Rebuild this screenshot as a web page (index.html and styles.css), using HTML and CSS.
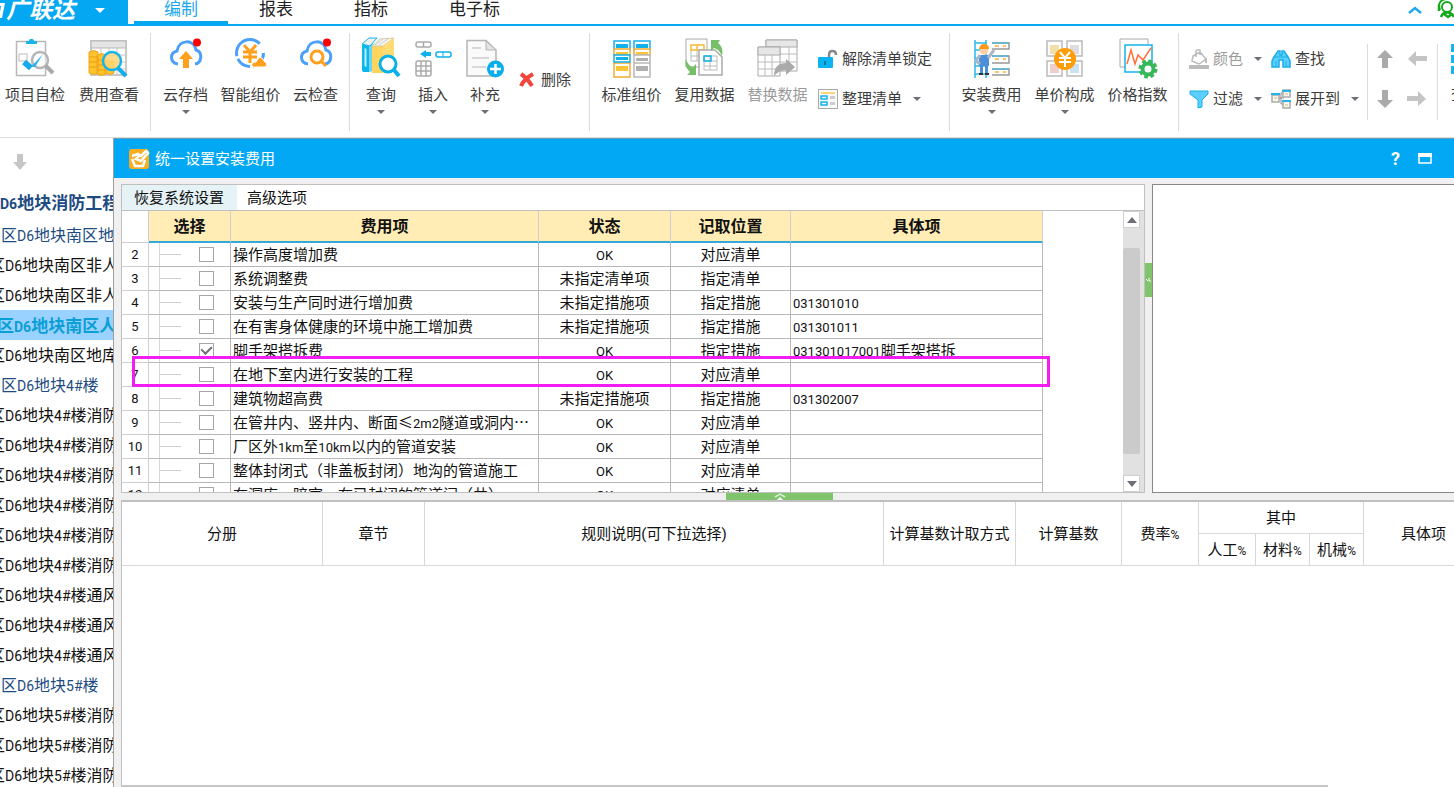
FILE: index.html
```html
<!DOCTYPE html>
<html lang="zh-CN">
<head>
<meta charset="utf-8">
<title>统一设置安装费用</title>
<link rel="stylesheet" href="styles.css">
</head>
<body>
<header class="topbar">
  <button class="brand" type="button">
    <svg class="brand-mark" viewBox="0 0 6 20"><path d="M0 3H5L2 18H-1L1 6H0Z" fill="#fff"/></svg>
    <span class="brand-name">广联达</span><span class="caret caret-white"></span>
  </button>
  <nav class="tabs">
    <a class="tab active" href="#">编制</a>
    <a class="tab" href="#">报表</a>
    <a class="tab" href="#">指标</a>
    <a class="tab" href="#">电子标</a>
  </nav>
  <div class="top-tools">
    <svg width="14" height="8" viewBox="0 0 14 8"><path d="M1 7L7 2L13 7" fill="none" stroke="#1ba8ec" stroke-width="2.4"/></svg>
    <svg width="17" height="20" viewBox="0 0 17 20"><g fill="none" stroke="#14a81c"><circle cx="10" cy="7" r="5" stroke-width="2"/><path d="M3 10C0 4 4-1 10-1" stroke-width="2"/><path d="M2 5V11M4 17C6 11 14 11 17 17M7 14L11 17L15 14" stroke-width="2.5"/></g></svg>
  </div>
</header>

<div class="ribbon">
  <section class="group g-check">
    <button class="big" type="button">
      <svg viewBox="0 0 40 40"><g transform="translate(-4 0)"><rect x="5.500" y="3.500" width="29" height="34" fill="#fff" stroke="#b8b8b8" stroke-width="1.500"/><path d="M15 6V3H18C18 0 23 0 23 3H26V6Z" fill="#19b5ea"/><rect x="8" y="16" width="8" height="7" fill="none" stroke="#bbb"/><path d="M13 24L20 30" fill="none" stroke="#17a9ee" stroke-width="6"/><circle cx="29" cy="22" r="8" fill="#fff" fill-opacity=".5" stroke="#b5b5b5" stroke-width="2.500"/><path d="M35 28L42 35" stroke="#aaa" stroke-width="4"/><path d="M20 29L32 16L24 29Z" fill="#20b5f5"/></g></svg>
      <span>项目自检</span></button>
    <button class="big" type="button">
      <svg viewBox="0 0 40 40"><rect x="2" y="3" width="35" height="34" fill="#fff" stroke="#b8b8b8" stroke-width="1.500"/><rect x="2" y="3" width="35" height="7" fill="#e4e4e4" stroke="#b8b8b8"/><path d="M2 17H37M2 24H37M2 31H37M12 10V37M20 10V37M28 10V37" stroke="#c4c4c4"/><path d="M0 14Q5 11 9 14V35Q5 38 0 35ZM8 17Q13 14 17 17V36Q12 39 8 36ZM16 23H25V35Q20 38 16 35Z" fill="#ffc32c" stroke="#f0a51e"/><path d="M0 19H9M0 24H9M0 29H9M8 22H17M8 27H17M8 32H17" stroke="#e99d12"/><circle cx="23" cy="23" r="9" fill="#ffd673" fill-opacity=".8" stroke="#16b4ef" stroke-width="2.500"/><path d="M29 30L37 38" stroke="#12aeea" stroke-width="4"/></svg>
      <span>费用查看</span></button>
  </section>

  <section class="group g-cloud">
    <button class="big" type="button">
      <svg viewBox="0 0 40 40"><path d="M12 26C4 25 3 15 11 13C13 1 28 1 30 12C37 14 36 25 29 26" fill="none" stroke="#4ba0fa" stroke-width="3"/><path d="M20 13L27 21H23V30H17V21H13Z" fill="#ff9f1c"/><circle cx="31" cy="4.500" r="4" fill="#f00"/></svg>
      <span>云存档</span><i class="caret"></i></button>
    <button class="big" type="button">
      <svg viewBox="0 0 40 40"><circle cx="19" cy="15" r="13.500" fill="none" stroke="#4ba0fa" stroke-width="3" stroke-dasharray="18 3 15 3 35 12"/><path d="M13 7L19 14L25 7M19 14V25M12 14H26M12 19H26" fill="none" stroke="#ff9f1c" stroke-width="3"/><path d="M21 29Q20 24 25 24Q29 15 33 23Q37 25 35 29Z" fill="#ff9f1c" stroke="#fff"/></svg>
      <span>智能组价</span></button>
    <button class="big" type="button">
      <svg viewBox="0 0 40 40"><path d="M12 26C4 25 3 15 11 13C13 1 28 1 30 12C37 14 36 25 29 26" fill="none" stroke="#4ba0fa" stroke-width="3"/><circle cx="21" cy="19" r="6" fill="#fff" stroke="#ff9f1c" stroke-width="3"/><path d="M25 23L30 28" stroke="#ff9f1c" stroke-width="3"/><circle cx="31" cy="4.500" r="4" fill="#f00"/></svg>
      <span>云检查</span></button>
  </section>

  <section class="group g-edit">
    <button class="big" type="button">
      <svg viewBox="0 0 40 40"><path d="M1 6L9 34L2 34L1 32Z" fill="#0bb7ec"/><path d="M1 6L8 8V34L1 32Z" fill="#0bb7ec"/><path d="M8 8L12 5V33L8 34Z" fill="#6fd4f2"/><path d="M1 6L8 0H16L9 8Z" fill="#eee" stroke="#0bb7ec"/><path d="M3.500 10L5.500 11V29L3.500 28Z" fill="#bdeefa"/><path d="M11 8H22V35H11Z" fill="#ffd560"/><path d="M11 8L19 1L33 0L22 8Z" fill="#f6f6f6" stroke="#d5c9a4"/><path d="M14 7L22 1M18 7L27 1" stroke="#ccc"/><path d="M22 8L33 0V30L22 35Z" fill="#ffdc73"/><circle cx="27" cy="26" r="8" fill="#fff" stroke="#08b1e8" stroke-width="3"/><path d="M33 32L38 38" stroke="#08b1e8" stroke-width="4"/></svg>
      <span>查询</span><i class="caret"></i></button>
    <button class="big" type="button">
      <svg viewBox="0 0 40 40"><g fill="#fff" stroke="#aaa" stroke-width="1.500"><rect x="3" y="4" width="15" height="5" rx="2"/><path d="M10.500 4V9"/><rect x="3" y="23" width="15" height="15" rx="2"/><path d="M3 28H18M3 33H18M8 23V38M13 23V38"/></g><path d="M7 16L13 12V14H18V18H13V20Z" fill="#0db1ec"/><rect x="23" y="14" width="15" height="5" rx="2" fill="#fff" stroke="#0db1ec" stroke-width="1.500"/><path d="M30 14V19" stroke="#0db1ec"/></svg>
      <span>插入</span><i class="caret"></i></button>
    <button class="big" type="button">
      <svg viewBox="0 0 40 40"><path d="M2 2.500H21L31 12V38H2Z" fill="#fafafa" stroke="#b5b5b5" stroke-width="1.500"/><path d="M21 3V12H31Z" fill="#e3e3e3" stroke="#b5b5b5"/><path d="M7 10H16M7 20H24M7 29H21" stroke="#d8d8d8" stroke-width="2"/><circle cx="30.500" cy="31" r="8.500" fill="#08aeea"/><path d="M25 31H36M30.500 26V36" stroke="#fff" stroke-width="2.500"/></svg>
      <span>补充</span><i class="caret"></i></button>
    <button class="small delete" type="button">
      <svg width="16" height="16" viewBox="0 0 16 16"><path d="M2 2Q9 7 13 14M14 2Q5 7 2 14" fill="none" stroke="#f4443c" stroke-width="4"/></svg>删除</button>
  </section>

  <section class="group g-list">
    <button class="big" type="button">
      <svg viewBox="0 0 40 40"><g fill="#fff" stroke-width="1.500"><path d="M2 3H18V12H2ZM22 3H38V12H22Z" stroke="#12b0e9"/><path d="M2 11H18V17H2ZM22 11H38V17H22ZM2 25H18V39H2Z" stroke="#f5ac32"/><path d="M2 17H18V24H2Z" stroke="#12b0e9"/><path d="M22 17H38V25H22ZM22 25H38V39H22Z" stroke="#b8b8b8"/></g><path d="M4 6H16V10H4ZM24 6H36V10H24ZM4 19H16V22H4Z" fill="#12b0e9"/><path d="M4 14H16V16H4ZM24 14H36V16H24ZM4 28H16V33H4Z" fill="#ffc336"/><path d="M24 20H36V23H24ZM24 28H36V33H24Z" fill="#b0b0b0"/></svg>
      <span>标准组价</span></button>
    <button class="big" type="button">
      <svg viewBox="0 0 40 40"><path d="M1 1H22V29H1Z" fill="#fff" stroke="#aaa"/><path d="M6 7H19V23H6ZM6 12H19M6 18H19M12 7V23" fill="none" stroke="#bbb"/><path d="M6 7H19V12H6ZM12 7V12" fill="none" stroke="#ffc336" stroke-width="1.500"/><path d="M14 12H30L37 19V37H14Z" fill="#fff" stroke="#aaa" stroke-width="1.500"/><path d="M19 18H32V32H19ZM19 23H32M19 28H32M25 18V32" fill="none" stroke="#bbb"/><rect x="19" y="18" width="7" height="5" fill="none" stroke="#12b0e9" stroke-width="1.500"/><path d="M26 2H35L33 5Q39 9 37 18Q34 11 29 10L26 13ZM1 21Q3 28 8 29L11 26V37H2L5 34Q-1 29 1 21Z" fill="#75bf69"/></svg>
      <span>复用数据</span></button>
    <button class="big disabled" type="button" disabled>
      <svg viewBox="0 0 40 40"><path d="M8 2H39V33H8Z" fill="#fff" stroke="#aaa"/><path d="M8 2H39V9H8Z" fill="#e7e7e7" stroke="#aaa"/><path d="M31 9V33M22 16H39M22 24H39" stroke="#bbb"/><path d="M0 9H22V38H0Z" fill="#fff" stroke="#aaa"/><path d="M0 9H22V17H0Z" fill="#e7e7e7" stroke="#aaa"/><path d="M0 24H22M0 31H22M7 17V38M14 17V38" stroke="#bbb"/><path d="M16 38Q16 25 28 25V21L37 29L28 37V32Q21 32 16 38Z" fill="#aaa"/></svg>
      <span>替换数据</span></button>
    <div class="stack">
      <button class="small" type="button"><svg width="20" height="20" viewBox="0 0 20 20"><path d="M11 10V6Q11 2 14.500 2Q18 2 18 6" fill="none" stroke="#888" stroke-width="2.500"/><rect y="8" width="15" height="11" rx="1" fill="#0bb4f1"/><path d="M7 12V16" stroke="#087da5" stroke-width="2"/></svg>解除清单锁定</button>
      <button class="small" type="button"><svg width="20" height="20" viewBox="0 0 20 20"><rect x=".5" y=".5" width="19" height="19" fill="#fafafa" stroke="#aaa"/><path d="M3 4H17" stroke="#ffd777" stroke-width="2"/><path d="M3 7H9V10H3ZM3 13H9V16H3Z" fill="#dff5ff" stroke="#19b2eb" stroke-width="1.500"/><path d="M12 7H17V10H12ZM12 13H17V16H12Z" fill="#ccc"/></svg>整理清单<i class="caret"></i></button>
    </div>
  </section>

  <section class="group g-price">
    <button class="big" type="button">
      <svg viewBox="0 0 40 40"><path d="M3 2V40M14 2V40M3 5H14M3 12H14M3 20H14M3 28H14M3 36H14" stroke="#28bbea" stroke-width="1.500"/><path d="M20 5H37V11H20M20 18H37V25H20M20 31H37V37H20" fill="none" stroke="#999" stroke-width="1.500"/><path d="M20 5H37M20 18H37M20 31H37" stroke="#28bbea"/><path d="M23 8H27M31 8H34M23 21H27M31 21H34M23 34H27M31 34H34" stroke="#ffad39" stroke-width="1.500"/><path d="M7 17H17V28H16V36H13V28H11V36H8V28H7Z" fill="#4b8fd8"/><path d="M8 17L4 23L8 26M16 20L22 12" fill="none" stroke="#aab8c5" stroke-width="3"/><circle cx="12" cy="12" r="4.500" fill="#ffd0a3"/><path d="M7 11Q8 6 12 6Q17 6 17 11Z" fill="#ff9619"/><path d="M7 36H11M13 36H17" stroke="#333" stroke-width="2"/></svg>
      <span>安装费用</span><i class="caret"></i></button>
    <button class="big" type="button">
      <svg viewBox="0 0 40 40"><path d="M2 3H17V18H2ZM22 3H37V18H22ZM2 23H17V38H2ZM22 23H37V38H22Z" fill="#fff" stroke="#bbb" stroke-width="1.500"/><path d="M5 7H14V16H5Z" fill="#efe0aa"/><path d="M25 7H34V16H25Z" fill="#ddd"/><path d="M5 26H14V35H5Z" fill="#efcece"/><path d="M25 26H34V35H25Z" fill="#cce2f1"/><circle cx="20" cy="21" r="11" fill="#ff9d08"/><path d="M15 14L20 20L25 14M20 20V29M14 20H26M14 24H26" fill="none" stroke="#fff" stroke-width="2"/></svg>
      <span>单价构成</span><i class="caret"></i></button>
    <button class="big" type="button">
      <svg viewBox="0 0 40 40"><path d="M2 1H30V29H2Z" fill="#fff" stroke="#aaa"/><path d="M7 7H34V34H7Z" fill="#fff" stroke="#14b4ea" stroke-width="1.500"/><path d="M9 26L13 12L17 26L20 17L25 22L33 10" fill="none" stroke="#ff7138" stroke-width="1.500"/><circle cx="30" cy="31" r="7.500" fill="none" stroke="#37b75a" stroke-width="4" stroke-dasharray="3.500 2.400"/><circle cx="30" cy="31" r="5.500" fill="#fff" stroke="#37b75a" stroke-width="4"/></svg>
      <span>价格指数</span></button>
  </section>

  <section class="group g-find">
    <button class="small disabled" type="button"><svg width="20" height="20" viewBox="0 0 20 20"><path d="M4 7L11 3L17 10L10 15L3 12ZM7 8V2Q8 0 11 1V6" fill="none" stroke="#bbb" stroke-width="1.500"/><path d="M17 9V14" stroke="#bbb" stroke-width="2"/><path d="M0 16H20V20H0Z" fill="#bbb"/></svg>颜色<i class="caret"></i></button>
    <button class="small" type="button"><svg width="20" height="20" viewBox="0 0 20 20"><path d="M3 8L7 2H9V6H11V2H13L17 8L19 12V18H12V11H8V18H1V12Z" fill="#5cceff" stroke="#18aee9" stroke-width="1.500"/><path d="M3 8H17M5 12V17M15 12V17" stroke="#18aee9"/></svg>查找</button>
    <button class="small" type="button"><svg width="20" height="20" viewBox="0 0 20 20"><path d="M1 2H19V5L13 11V18L9 19V11L1 5Z" fill="#5cceff" stroke="#18aee9"/></svg>过滤<i class="caret"></i></button>
    <button class="small" type="button"><svg width="20" height="20" viewBox="0 0 20 20"><path d="M8 9H13M10 4V15H13M10 4H13" fill="none" stroke="#888"/><path d="M1 6H8V13H1ZM12 1H19V8H12ZM12 12H19V19H12Z" fill="#faf6ee" stroke="#aaa" stroke-width="1.500"/><path d="M0 5H9M11 2H20M11 12H20" stroke="#23b5ea" stroke-width="2"/><path d="M3 9H6M14 5H17M14 16H17" stroke="#d8b478"/></svg>展开到<i class="caret"></i></button>
  </section>

  <section class="group g-move">
    <button type="button" aria-label="上移"><svg viewBox="0 0 20 20"><path d="M10 1L18 9H13V19H7V9H2Z" fill="#aaa"/></svg></button>
    <button type="button" aria-label="左移"><svg viewBox="0 0 20 20"><path d="M1 10L9 2V7H20V12H9V17Z" fill="#c4c4c4"/></svg></button>
    <button type="button" aria-label="下移"><svg viewBox="0 0 20 20"><path d="M10 19L18 11H13V1H7V11H2Z" fill="#aaa"/></svg></button>
    <button type="button" aria-label="右移"><svg viewBox="0 0 20 20"><path d="M19 10L11 2V7H0V12H11V17Z" fill="#c4c4c4"/></svg></button>
  </section>
  <section class="group g-more">
    <button class="big" type="button"><svg viewBox="0 0 40 40"><path d="M0 6H40V14H0ZM0 17H40V25H0ZM0 28H40V36H0Z" fill="#18b4ed"/></svg><span>查看</span></button>
  </section>
</div>

<main class="workspace">
  <aside class="sidebar">
    <button class="side-down" type="button" aria-label="下移"><svg width="16" height="16" viewBox="0 0 16 16"><path d="M5 0H11V8H15L8 16L1 8H5Z" fill="#c6c6c6"/></svg></button>
    <ul class="tree">
      <li class="root"><span>D6</span>地块消防工程</li>
      <li class="unit">区<span>D6</span>地块南区地库</li>
      <li>区<span>D6</span>地块南区非人防</li>
      <li>区<span>D6</span>地块南区非人防</li>
      <li class="selected">区<span>D6</span>地块南区人防</li>
      <li>区<span>D6</span>地块南区地库</li>
      <li class="unit">区<span>D6</span>地块<span>4#</span>楼</li>
      <li>区<span>D6</span>地块<span>4#</span>楼消防</li>
      <li>区<span>D6</span>地块<span>4#</span>楼消防</li>
      <li>区<span>D6</span>地块<span>4#</span>楼消防</li>
      <li>区<span>D6</span>地块<span>4#</span>楼消防</li>
      <li>区<span>D6</span>地块<span>4#</span>楼消防</li>
      <li>区<span>D6</span>地块<span>4#</span>楼消防</li>
      <li>区<span>D6</span>地块<span>4#</span>楼通风</li>
      <li>区<span>D6</span>地块<span>4#</span>楼通风</li>
      <li>区<span>D6</span>地块<span>4#</span>楼通风</li>
      <li class="unit">区<span>D6</span>地块<span>5#</span>楼</li>
      <li>区<span>D6</span>地块<span>5#</span>楼消防</li>
      <li>区<span>D6</span>地块<span>5#</span>楼消防</li>
      <li>区<span>D6</span>地块<span>5#</span>楼消防</li>
    </ul>
  </aside>

  <section class="dialog">
    <header class="titlebar">
      <svg width="20" height="20" viewBox="0 0 20 20"><rect width="20" height="20" rx="3" fill="#f9ad22"/><path d="M3 7L9 5L12 7L17 2L19 4L12 12L7 10L10 7M3 10L6 17L14 17L16 11" fill="none" stroke="#fff" stroke-width="2.500"/></svg>
      <h1>统一设置安装费用</h1>
      <button class="help" type="button">?</button>
      <button class="max" type="button" aria-label="最大化"><svg width="14" height="11" viewBox="0 0 14 11"><path d="M1 1H13V10H1Z" fill="none" stroke="#fff" stroke-width="1.500"/><path d="M0 0H14V4H0Z" fill="#fff"/></svg></button>
    </header>

    <div class="upper">
      <div class="fees">
        <div class="fee-tools"><button class="hot" type="button">恢复系统设置</button><button type="button">高级选项</button></div>
        <div class="fee-body">
          <div class="fee-scroll">
            <table class="fee-table">
              <colgroup><col class="c-no"><col class="c-pick"><col class="c-fee"><col class="c-state"><col class="c-pos"><col class="c-item"></colgroup>
              <thead><tr><th class="corner"></th><th>选择</th><th>费用项</th><th>状态</th><th>记取位置</th><th>具体项</th></tr></thead>
              <tbody>
                <tr><td>2</td><td><label class="pick"><input type="checkbox" aria-label="选择第2行"></label></td><td>操作高度增加费</td><td><span>OK</span></td><td>对应清单</td><td></td></tr>
                <tr><td>3</td><td><label class="pick"><input type="checkbox" aria-label="选择第3行"></label></td><td>系统调整费</td><td>未指定清单项</td><td>指定清单</td><td></td></tr>
                <tr><td>4</td><td><label class="pick"><input type="checkbox" aria-label="选择第4行"></label></td><td>安装与生产同时进行增加费</td><td>未指定措施项</td><td>指定措施</td><td><span>031301010</span></td></tr>
                <tr><td>5</td><td><label class="pick"><input type="checkbox" aria-label="选择第5行"></label></td><td>在有害身体健康的环境中施工增加费</td><td>未指定措施项</td><td>指定措施</td><td><span>031301011</span></td></tr>
                <tr><td>6</td><td><label class="pick"><input type="checkbox" checked aria-label="选择第6行"></label></td><td>脚手架搭拆费</td><td><span>OK</span></td><td>指定措施</td><td><span>031301017001</span>脚手架搭拆</td></tr>
                <tr><td>7</td><td><label class="pick"><input type="checkbox" aria-label="选择第7行"></label></td><td>在地下室内进行安装的工程</td><td><span>OK</span></td><td>对应清单</td><td></td></tr>
                <tr><td>8</td><td><label class="pick"><input type="checkbox" aria-label="选择第8行"></label></td><td>建筑物超高费</td><td>未指定措施项</td><td>指定措施</td><td><span>031302007</span></td></tr>
                <tr><td>9</td><td><label class="pick"><input type="checkbox" aria-label="选择第9行"></label></td><td>在管井内、竖井内、断面<b>≤</b><span>2m2</span>隧道或洞内<b>…</b></td><td><span>OK</span></td><td>对应清单</td><td></td></tr>
                <tr><td>10</td><td><label class="pick"><input type="checkbox" aria-label="选择第10行"></label></td><td>厂区外<span>1km</span>至<span>10km</span>以内的管道安装</td><td><span>OK</span></td><td>对应清单</td><td></td></tr>
                <tr><td>11</td><td><label class="pick"><input type="checkbox" aria-label="选择第11行"></label></td><td>整体封闭式（非盖板封闭）地沟的管道施工</td><td><span>OK</span></td><td>对应清单</td><td></td></tr>
                <tr><td>12</td><td><label class="pick"><input type="checkbox" aria-label="选择第12行"></label></td><td>在洞库、暗室、在已封闭的管道间（井）、<b>…</b></td><td><span>OK</span></td><td>对应清单</td><td></td></tr>
              </tbody>
            </table>
          </div>
          <div class="scrollbar">
            <button type="button" aria-label="向上滚动"><i class="tri up"></i></button>
            <div class="thumb"></div>
            <button type="button" aria-label="向下滚动"><i class="tri"></i></button>
          </div>
        </div>
        <div class="marker"></div>
      </div>
      <div class="split-v"><div class="grip"><svg width="5" height="4" viewBox="0 0 5 4"><path d="M0 1L2 3M3 0V3L5 3" fill="none" stroke="#fff"/></svg></div></div>
      <div class="detail"></div>
    </div>
    <div class="split-h"><div class="grip"><svg width="12" height="7" viewBox="0 0 12 7"><path d="M1 4L6 1L11 4" fill="none" stroke="#d8efd2" stroke-width="1.500"/><path d="M3 7L6 4L9 7Z" fill="#fff"/></svg></div></div>
    <div class="rules">
      <table class="rule-table">
        <colgroup><col class="r-vol"><col class="r-chap"><col class="r-desc"><col class="r-mode"><col class="r-base"><col class="r-rate"><col class="r-lab"><col class="r-mat"><col class="r-mat"><col class="r-item"></colgroup>
        <thead>
          <tr><th rowspan="2">分册</th><th rowspan="2">章节</th><th rowspan="2">规则说明(可下拉选择)</th><th rowspan="2">计算基数计取方式</th><th rowspan="2">计算基数</th><th rowspan="2">费率<span>%</span></th><th colspan="3">其中</th><th rowspan="2">具体项</th></tr>
          <tr><th>人工<span>%</span></th><th>材料<span>%</span></th><th>机械<span>%</span></th></tr>
        </thead>
      </table>
      <div class="hscroll"></div>
    </div>
  </section>
</main>
</body>
</html>
```
FILE: styles.css
```css
* { box-sizing: border-box; }
body {
  margin: 0;
  height: 100vh;
  display: flex;
  flex-direction: column;
  overflow: hidden;
  background: #fff;
  color: #111;
  font: 15px/20px Roboto, "Noto Sans CJK SC", sans-serif;
}
button {
  margin: 0;
  padding: 0;
  border: 0;
  background: none;
  color: inherit;
  font: inherit;
  white-space: nowrap;
}
svg { display: block; flex: none; overflow: visible; }

.caret {
  flex: none;
  width: 0;
  height: 0;
  border: 4px solid transparent;
  border-top-color: #6e6e78;
  border-bottom: 0;
}
.caret-white { border-width: 5px; border-bottom: 0; border-top-color: #fff; }

/* top bar */
.topbar { flex: none; display: flex; height: 26px; border-bottom: 2px solid #04a8f2; }
.brand {
  flex: none;
  width: 128px;
  height: 24px;
  display: flex;
  align-items: center;
  background: #04a8f2;
  color: #fff;
}
.brand-mark { width: 6px; height: 20px; margin-bottom: 4px; }
.brand-name { font-size: 23px; font-weight: 700; font-style: italic; padding-bottom: 2px; }
.brand .caret { margin-left: 20px; margin-bottom: 4px; }
.tabs { display: flex; gap: 1px; margin-left: 6px; }
.tab {
  height: 24px;
  padding: 0 30px;
  color: #222;
  font-size: 17px;
  line-height: 18px;
  text-decoration: none;
}
.tab.active { color: #1ba8ec; border-bottom: 3px solid #04a8f2; }
.top-tools { margin-left: auto; display: flex; align-items: center; gap: 15px; padding-bottom: 4px; }

/* ribbon */
.ribbon { flex: none; display: flex; height: 112px; padding-top: 7px; border-bottom: 1px solid #ddd; overflow: hidden; color: #3c3c3c; }
.group { flex: none; display: flex; height: 98px; padding-top: 5px; border-right: 1px solid #dcdcdc; }
.big { display: flex; flex-direction: column; align-items: center; }
.big svg { width: 40px; height: 40px; margin-bottom: 7px; }
.big .caret { margin-top: 5px; }
.small { display: flex; align-items: center; gap: 4px; height: 40px; padding-top: 2px; }
.small .caret { margin-left: 7px; }
.disabled { color: #9b9b9b; }
.g-check { width: 151px; }
.g-check .big { width: 74px; }
.g-check .big:first-child { margin-left: -2px; }
.g-cloud { width: 199px; padding-left: 2px; }
.g-cloud .big { width: 65px; }
.g-edit { width: 240px; padding-left: 5px; }
.g-edit .big { width: 52px; }
.delete { margin-left: 8px; gap: 6px; height: 82px; }
.g-list { width: 360px; padding-left: 5px; }
.g-list .big { width: 73px; }
.stack { padding-left: 4px; }
.g-price { width: 229px; padding-left: 5px; }
.g-price .big { width: 73px; }
.g-find {
  display: grid;
  grid-template-columns: 82px 97px;
  grid-auto-rows: 40px;
  padding-left: 10px;
  border: 0;
}
.g-move {
  display: grid;
  grid-template-columns: 32px 32px;
  grid-auto-rows: 40px;
  align-items: center;
  align-content: center;
  height: 76px;
  width: 71px;
  margin-top: 11px;
  margin-left: -1px;
  padding: 0 0 6px 7px;
  border-left: 1px solid #dcdcdc;
}
.g-move svg { width: 20px; height: 20px; }
.g-more { padding-left: 13px; border: 0; }
.g-more .big { align-items: flex-start; }

/* workspace */
.workspace { flex: 1; min-height: 0; display: flex; }
.sidebar { flex: none; width: 113px; overflow: hidden; }
.side-down { display: block; margin: 16px 0 17px 12px; }
.tree { margin: 0; padding: 0; list-style: none; }
.tree li {
  height: 30px;
  padding-left: 1px;
  font-size: 16px;
  line-height: 32px;
  text-indent: -12px;
  white-space: nowrap;
}
.tree span { font-size: 14px; }
.tree .root { height: 33px; font-size: 17px; font-weight: 700; color: #1d4b82; text-indent: -1px; }
.tree .unit { color: #1d4b82; text-indent: 0; }
.tree .selected { font-size: 17px; font-weight: 700; color: #0a9fd6; background: #99d1ff; text-indent: -4px; }

.dialog {
  flex: 1;
  min-width: 0;
  display: flex;
  flex-direction: column;
  border-left: 1px solid #a0a0a0;
  background: #f0f0f0;
}
.titlebar {
  flex: none;
  display: flex;
  align-items: center;
  height: 40px;
  padding: 0 22px 0 15px;
  border-top: 1px solid #6a9cb8;
  background: #02a8f3;
  color: #fff;
}
.titlebar h1 { margin: 0 auto 0 6px; font-size: 15px; font-weight: 400; }
.help { font-size: 18px; font-weight: 700; margin-right: 18px; }
.upper { flex: none; display: flex; height: 309px; margin-top: 6px; margin-left: 7px; }
.fees {
  position: relative;
  flex: 1;
  min-width: 0;
  display: flex;
  flex-direction: column;
  border: 1px solid #c0c0c0;
  background: #fff;
}
.fee-tools { flex: none; display: flex; height: 26px; border-bottom: 1px solid #c0c0c0; }
.fee-tools button { padding: 1px 10px 0; }
.fee-tools .hot { background: #e5f3f7; padding: 1px 13px 0 12px; }
.fee-body { flex: 1; min-height: 0; display: flex; }
.fee-scroll { flex: 1; min-width: 0; overflow: hidden; }
.fee-table { width: 921px; table-layout: fixed; border-collapse: separate; border-spacing: 0; }
.c-no { width: 27px; }
.c-pick { width: 82px; }
.c-fee { width: 308px; }
.c-state { width: 132px; }
.c-pos { width: 120px; }
.c-item { width: 252px; }
.fee-table th {
  height: 32px;
  padding: 2px 0 0;
  border-right: 1px solid #d0d0d0;
  border-bottom: 2px solid #36a8d6;
  background: #ffedb5;
  font-size: 16px;
  font-weight: 700;
}
.fee-table .corner { background: #fff; border-bottom: 1px solid #ccc; }
.fee-table td {
  height: 24px;
  padding: 1px 2px 0;
  border-right: 1px solid #b8b8b8;
  border-bottom: 1px solid #b8b8b8;
  line-height: 20px;
  white-space: nowrap;
  overflow: hidden;
}
.fee-table span { font-size: 13px; }
.fee-table b { font-family: "Noto Sans CJK SC", sans-serif; font-weight: 400; line-height: 1; }
.fee-table td:nth-child(1) { text-align: center; font-size: 13px; padding: 0; border-color: #d0d0d0; }
.fee-table td:nth-child(2) { padding: 0; }
.fee-table td:nth-child(4), .fee-table td:nth-child(5) { text-align: center; }
.pick { display: flex; align-items: center; height: 23px; margin-left: 10px; border-left: 1px solid #d8d8d8; }
.pick::before { content: ""; width: 21px; border-top: 1px solid #d0d0d0; }
.pick input {
  appearance: none;
  display: grid;
  place-items: center;
  width: 15px;
  height: 15px;
  margin: 0 0 0 18px;
  border: 1px solid #a6a6a6;
  background: #fff;
}
.pick input:checked::after {
  content: "";
  width: 5px;
  height: 8px;
  margin-bottom: 3px;
  border: solid #6e6e78;
  border-width: 0 2px 2px 0;
  transform: rotate(45deg);
}
.scrollbar { flex: none; display: flex; flex-direction: column; width: 21px; background: #e1e1e1; }
.scrollbar button {
  flex: none;
  display: grid;
  place-items: center;
  width: 17px;
  height: 17px;
  border: 1px solid #cfcfcf;
  background: #fff;
}
.thumb { width: 17px; height: 206px; margin: 20px 0 auto; border-radius: 2px; background: #cbcbcb; }
.tri { border: 5px solid transparent; border-top: 6px solid #6e6e78; border-bottom: 0; }
.tri.up { transform: rotate(180deg); }
.marker {
  position: absolute;
  top: 171px;
  left: 10px;
  right: 94px;
  height: 31px;
  border: 3px solid #f31cf3;
  pointer-events: none;
}
.split-v { flex: none; width: 7px; padding-top: 79px; }
.split-v .grip { display: grid; place-items: center; height: 34px; background: #80c46c; }
.detail { flex: none; width: 302px; border: 1px solid #888; border-right: 0; background: #fff; }
.split-h { flex: none; height: 7px; padding-left: 612px; }
.split-h .grip { display: grid; place-items: center; width: 107px; height: 7px; background: #80c46c; }
.rules {
  flex: 1;
  min-height: 0;
  display: flex;
  flex-direction: column;
  justify-content: space-between;
  margin-left: 7px;
  border-top: 2px solid #c0c0c0;
  border-left: 1px solid #c0c0c0;
  background: #fff;
  overflow: hidden;
}
.rule-table { width: 1362px; table-layout: fixed; border-collapse: separate; border-spacing: 0; }
.rule-table th {
  height: 32px;
  padding: 1px 0 0;
  border-right: 1px solid #d8d8d8;
  border-bottom: 1px solid #d8d8d8;
  font-weight: 400;
  white-space: nowrap;
}
.rule-table span { font-size: 12px; }
.r-vol { width: 201px; }
.r-chap { width: 102px; }
.r-desc { width: 459px; }
.r-mode { width: 132px; }
.r-base { width: 106px; }
.r-rate { width: 77px; }
.r-lab { width: 57px; }
.r-mat { width: 54px; }
.r-item { width: 120px; }
.hscroll { height: 2px; margin-right: 126px; background: #c6c6c6; }
```
